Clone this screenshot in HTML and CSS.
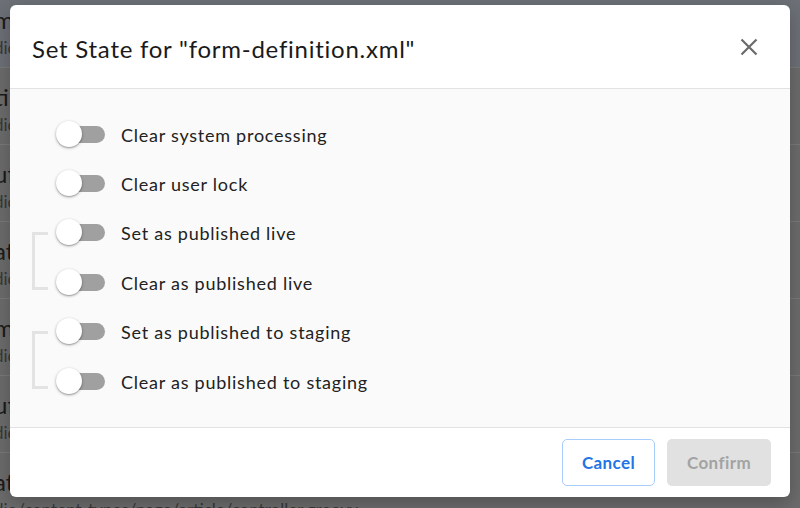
FILE: index.html
```html
<!DOCTYPE html>
<html lang="en">
<head>
<meta charset="utf-8">
<title>Set State</title>
<link rel="stylesheet" href="styles.css">
</head>
<body>
<div class="list">
  <div class="row row-selected"><div class="row-title">m</div><div class="row-sub">dio</div></div>
  <div class="row"><div class="row-title">ti</div><div class="row-sub">dio</div></div>
  <div class="row"><div class="row-title">uf</div><div class="row-sub">dio</div></div>
  <div class="row"><div class="row-title">at</div><div class="row-sub">dio</div></div>
  <div class="row"><div class="row-title">m</div><div class="row-sub">dio</div></div>
  <div class="row"><div class="row-title">uf</div><div class="row-sub">dio</div></div>
  <div class="row"><div class="row-title">at</div><div class="row-sub">dio/content-types/page/article/controller.groovy</div></div>
</div>

<div class="overlay">
  <div class="dialog" role="dialog">
    <header class="dialog-header">
      <h2 class="dialog-title">Set State for "form-definition.xml"</h2>
      <button class="close-btn" aria-label="Close">
        <svg width="18" height="18" viewBox="0 0 18 18"><path d="M1.5 1.5 L16.5 16.5 M16.5 1.5 L1.5 16.5" stroke="#6b6b6b" stroke-width="2.2" fill="none"/></svg>
      </button>
    </header>
    <section class="dialog-body">
      <label class="opt"><span class="switch"><span class="track"></span><span class="thumb"></span></span><span class="opt-label">Clear system processing</span></label>
      <label class="opt"><span class="switch"><span class="track"></span><span class="thumb"></span></span><span class="opt-label">Clear user lock</span></label>
      <div class="group">
        <label class="opt"><span class="switch"><span class="track"></span><span class="thumb"></span></span><span class="opt-label">Set as published live</span></label>
        <label class="opt"><span class="switch"><span class="track"></span><span class="thumb"></span></span><span class="opt-label">Clear as published live</span></label>
      </div>
      <div class="group">
        <label class="opt"><span class="switch"><span class="track"></span><span class="thumb"></span></span><span class="opt-label">Set as published to staging</span></label>
        <label class="opt"><span class="switch"><span class="track"></span><span class="thumb"></span></span><span class="opt-label">Clear as published to staging</span></label>
      </div>
    </section>
    <footer class="dialog-footer">
      <button class="btn btn-cancel">Cancel</button>
      <button class="btn btn-confirm" disabled>Confirm</button>
    </footer>
  </div>
</div>
</body>
</html>
```

FILE: styles.css
```css
* { box-sizing: border-box; }

html, body {
  margin: 0;
  padding: 0;
  width: 800px;
  height: 508px;
  overflow: hidden;
}

body {
  background: #6c6c6c;
  font-family: "Lato", "Noto Sans", sans-serif;
  position: relative;
}

.list {
  margin-top: -9px;
}

.row {
  height: 77px;
  border-bottom: 1px solid #7a7a7a;
  margin-left: -6px;
  display: flex;
  flex-direction: column;
  padding-top: 14px;
  background: #6c6c6c;
}

.row-selected {
  background: #6e7078;
}

.row-title {
  font-size: 24px;
  line-height: 30px;
  color: #1b1b1b;
}

.row-sub {
  font-size: 17px;
  line-height: 22px;
  color: #383838;
  margin-top: 2px;
}

.overlay {
  position: absolute;
  inset: 0;
  padding: 5px 10px 11px 10px;
}

.dialog {
  width: 780px;
  height: 492px;
  background: #ffffff;
  border-radius: 6px;
  box-shadow: 0 6px 20px rgba(0,0,0,0.25);
  display: flex;
  flex-direction: column;
  overflow: hidden;
}

.dialog-header {
  height: 84px;
  flex: none;
  display: flex;
  align-items: center;
  justify-content: space-between;
  padding: 0 32px 0 22px;
  border-bottom: 1px solid #e2e2e2;
}

.dialog-title {
  margin: 0;
  font-size: 24px;
  font-weight: 400;
  color: #1a1a1a;
  letter-spacing: 0.75px;
  padding-top: 3px;
}

.close-btn {
  background: none;
  border: 0;
  padding: 0;
  width: 18px;
  height: 18px;
  display: flex;
  margin-top: 1px;
}

.dialog-body {
  flex: 1;
  background: #fafafa;
  border-bottom: 1px solid #e2e2e2;
  padding: 21px 0 0 46px;
  display: flex;
  flex-direction: column;
}

.group {
  position: relative;
  display: flex;
  flex-direction: column;
}

.group::before {
  content: "";
  position: absolute;
  left: -24px;
  top: 23px;
  width: 13px;
  height: 52px;
  border: 3px solid #e3e3e3;
  border-right: 0;
}

.opt {
  height: 49.4px;
  display: flex;
  align-items: center;
}

.switch {
  position: relative;
  width: 50px;
  height: 26px;
  flex: none;
  margin-right: 15px;
}

.track {
  position: absolute;
  left: 10px;
  top: 4px;
  width: 39px;
  height: 17px;
  border-radius: 9px;
  background: #a0a0a0;
}

.thumb {
  position: absolute;
  left: 0;
  top: -1px;
  width: 26px;
  height: 26px;
  border-radius: 50%;
  background: #ffffff;
  box-shadow: 0 1px 3px rgba(0,0,0,0.35), 0 1px 1px rgba(0,0,0,0.12);
}

.opt-label {
  font-size: 18px;
  letter-spacing: 0.75px;
  color: #222222;
}

.dialog-footer {
  height: 69px;
  flex: none;
  display: flex;
  justify-content: flex-end;
  align-items: center;
  gap: 12px;
  padding: 0 19px 0 0;
}

.btn {
  height: 47px;
  border-radius: 5px;
  font-family: "Lato", "Noto Sans", sans-serif;
  font-size: 17px;
  font-weight: 700;
  letter-spacing: 0.4px;
  padding: 0;
}

.btn-cancel {
  width: 93px;
  background: #ffffff;
  border: 1px solid #a9cdfb;
  color: #1f74e6;
}

.btn-confirm {
  width: 104px;
  background: #e1e1e1;
  border: 0;
  color: #a3a3a3;
}
```
